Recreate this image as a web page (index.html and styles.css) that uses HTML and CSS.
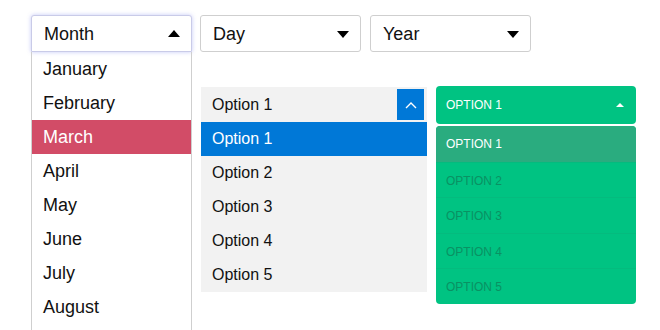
FILE: index.html
```html
<!DOCTYPE html>
<html lang="en">
<head>
  <meta charset="UTF-8" />
  <title>Dropdowns</title>
  <link rel="stylesheet" href="styles.css">
</head>
<body>

  <div class="page">

    <div class="date-select open">
      <div class="date-head">
        <span>Month</span>
        <span class="caret up"></span>
      </div>
      <ul class="date-list">
        <li>January</li>
        <li>February</li>
        <li class="active">March</li>
        <li>April</li>
        <li>May</li>
        <li>June</li>
        <li>July</li>
        <li>August</li>
        <li class="blank"></li>
      </ul>
    </div>

    <div class="right-col">
      <div class="date-row">
        <div class="date-select">
          <div class="date-head">
            <span>Day</span>
            <span class="caret"></span>
          </div>
        </div>
        <div class="date-select">
          <div class="date-head">
            <span>Year</span>
            <span class="caret"></span>
          </div>
        </div>
      </div>

      <div class="option-row">
        <div class="flat-select">
          <div class="flat-head">
            <span>Option 1</span>
            <span class="flat-btn">
              <svg width="12" height="8" viewBox="0 0 12 8"><polyline points="1,7 6,2 11,7" fill="none" stroke="#fff" stroke-width="1.4"/></svg>
            </span>
          </div>
          <ul class="flat-list">
            <li class="active">Option 1</li>
            <li>Option 2</li>
            <li>Option 3</li>
            <li>Option 4</li>
            <li>Option 5</li>
          </ul>
        </div>

        <div class="green-select">
          <div class="green-head">
            <span>OPTION 1</span>
            <span class="green-caret"></span>
          </div>
          <ul class="green-list">
            <li class="active">OPTION 1</li>
            <li>OPTION 2</li>
            <li>OPTION 3</li>
            <li>OPTION 4</li>
            <li>OPTION 5</li>
          </ul>
        </div>
      </div>
    </div>

  </div>

</body>
</html>
```

FILE: styles.css
```css
* {
  box-sizing: border-box;
}

html, body {
  margin: 0;
  height: 330px;
  overflow: hidden;
  background: #fff;
}

body {
  font-family: "Liberation Sans", Arial, sans-serif;
  color: #111;
}

ul {
  list-style: none;
  margin: 0;
  padding: 0;
}

.page {
  display: flex;
  align-items: flex-start;
  padding: 15px 0 0 31px;
  gap: 8px;
}

/* month / day / year */
.date-select {
  width: 161px;
  font-size: 18px;
}

.date-head {
  height: 37px;
  display: flex;
  align-items: center;
  justify-content: space-between;
  padding: 1px 11px 0 12px;
  border: 1px solid #cfcfcf;
  border-radius: 3px;
  background: #fff;
}

.date-select.open .date-head {
  border-color: #c9cbe8;
  border-radius: 3px 3px 0 0;
  box-shadow: 0 0 4px rgba(90, 100, 230, 0.35);
}

.caret {
  width: 0;
  height: 0;
  border-left: 6px solid transparent;
  border-right: 6px solid transparent;
  border-top: 7px solid #000;
}

.caret.up {
  border-top: none;
  border-bottom: 7px solid #000;
  margin-top: -2px;
}

.date-list {
  border-left: 1px solid #cfcfcf;
  border-right: 1px solid #cfcfcf;
}

.date-list li {
  height: 34px;
  line-height: 34px;
  padding-left: 11px;
}

.date-list li.active {
  background: #d24c67;
  color: #fff;
}

.right-col {
  display: flex;
  flex-direction: column;
  gap: 35px;
}

.date-row {
  display: flex;
  gap: 9px;
}

.option-row {
  display: flex;
  align-items: flex-start;
  gap: 9px;
  margin-left: 1px;
}

/* flat grey select */
.flat-select {
  width: 226px;
  background: #f2f2f2;
  font-size: 16px;
}

.flat-head {
  height: 35px;
  display: flex;
  align-items: center;
  justify-content: space-between;
  padding: 0 3px 0 11px;
}

.flat-btn {
  width: 27px;
  height: 31px;
  background: #0078d7;
  display: flex;
  align-items: center;
  justify-content: center;
}

.flat-list li {
  height: 34px;
  line-height: 34px;
  padding-left: 11px;
}

.flat-list li.active {
  background: #0078d7;
  color: #fff;
}

/* green select */
.green-select {
  width: 200px;
  margin-top: -1px;
  font-size: 12px;
}

.green-head {
  height: 38px;
  display: flex;
  align-items: center;
  justify-content: space-between;
  padding: 0 12px 0 10px;
  background: #00c382;
  color: #fff;
  border-radius: 4px;
}

.green-caret {
  width: 0;
  height: 0;
  border-left: 4px solid transparent;
  border-right: 4px solid transparent;
  border-bottom: 4px solid #fff;
}

.green-list {
  margin-top: 2px;
  background: #00c382;
  border-radius: 4px;
  overflow: hidden;
}

.green-list li {
  height: 35.6px;
  line-height: 36px;
  padding-left: 10px;
  color: #0a9163;
  border-top: 1px solid #04bb7e;
}

.green-list li:first-child {
  border-top: none;
}

.green-list li.active {
  background: #2aac7f;
  color: #fff;
}
```
